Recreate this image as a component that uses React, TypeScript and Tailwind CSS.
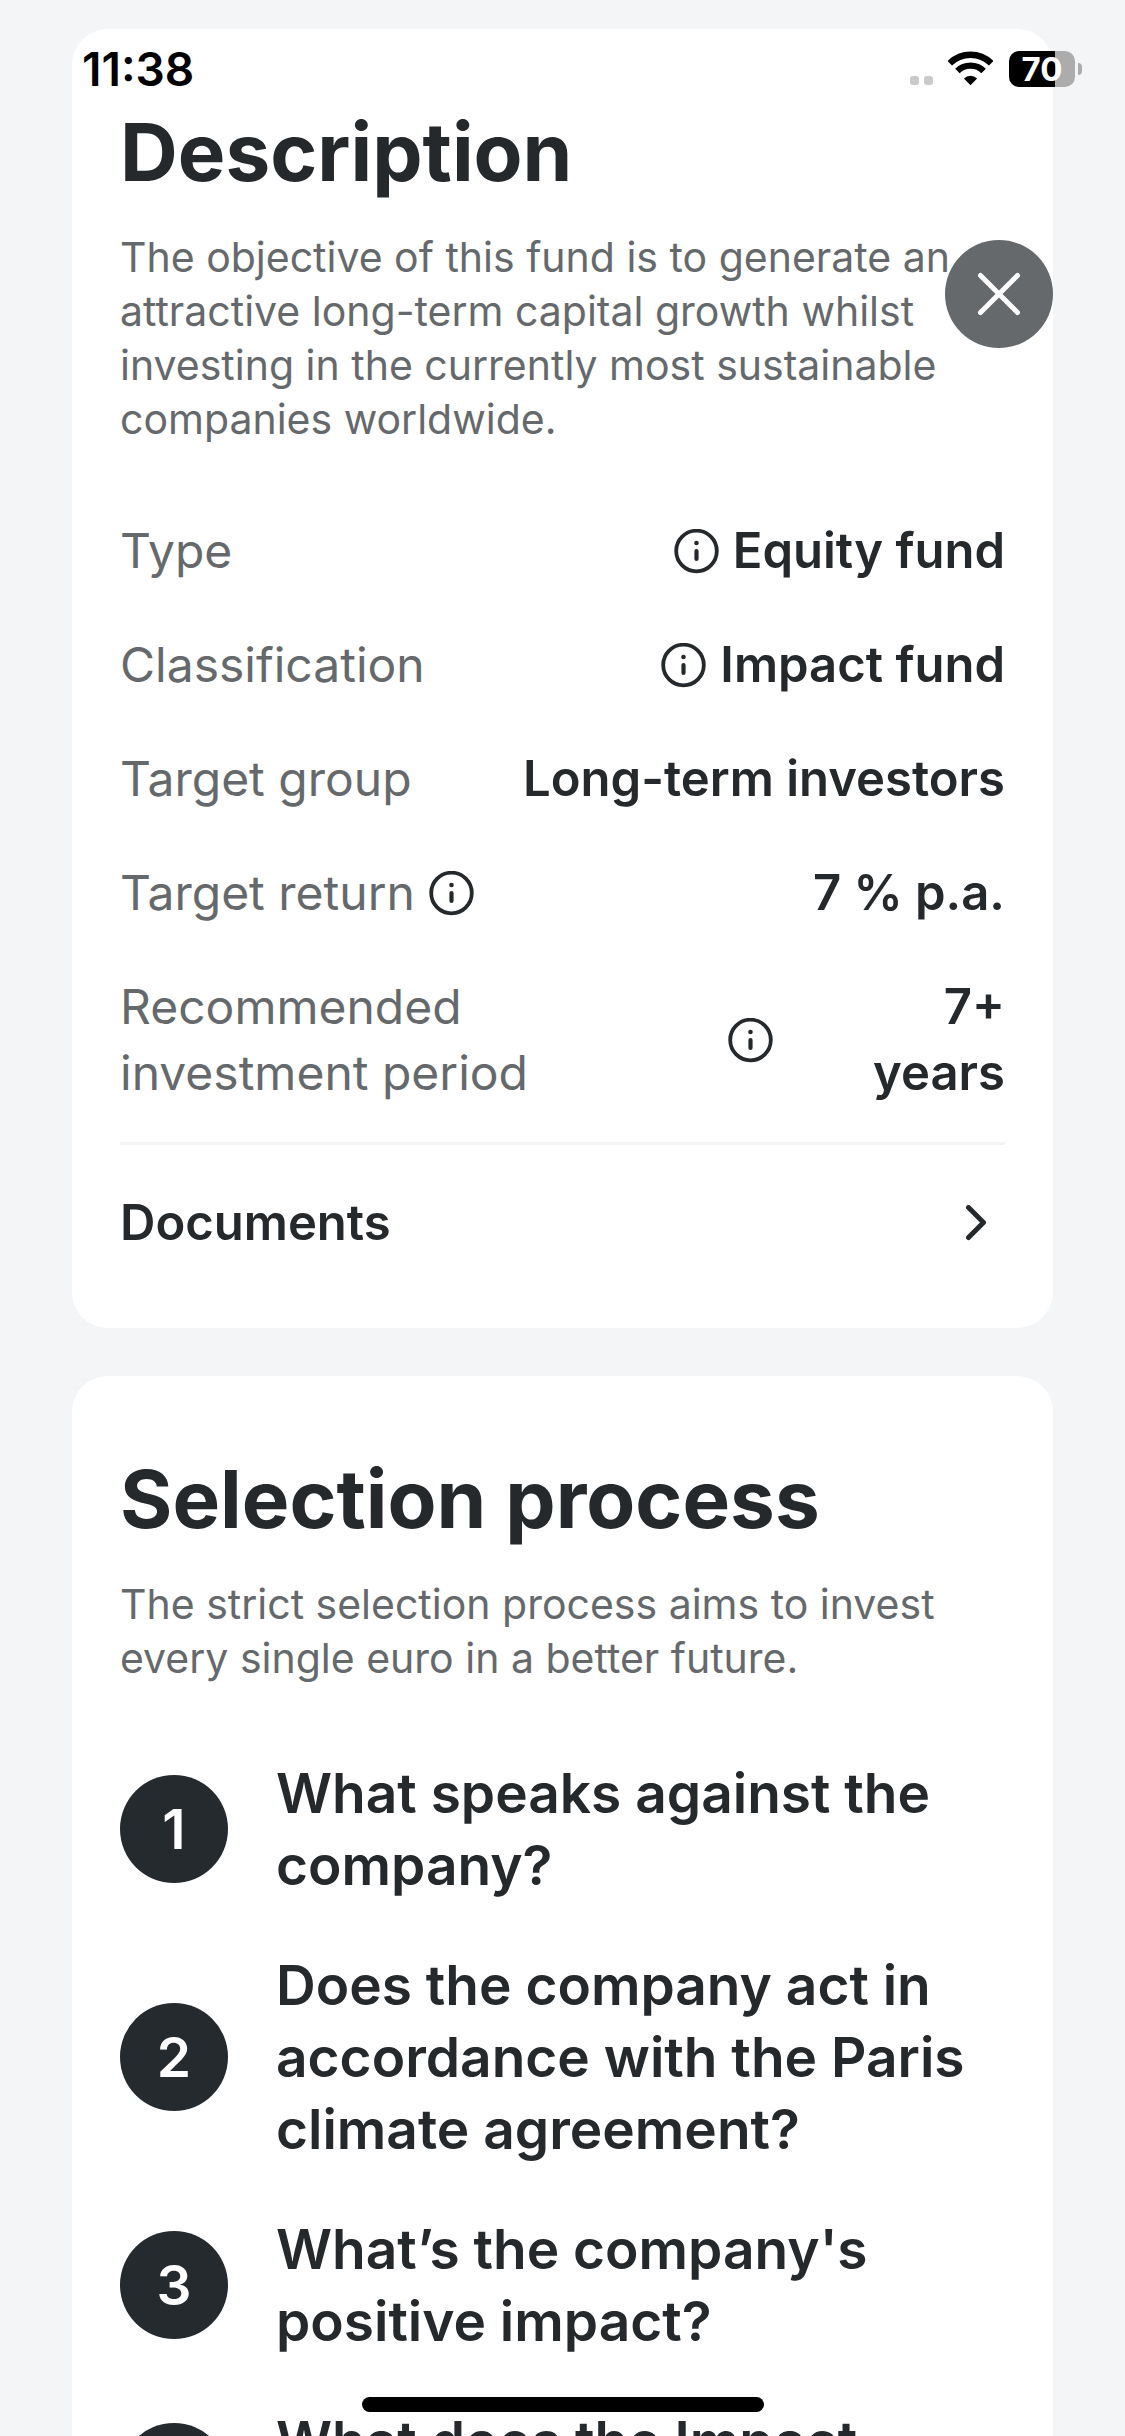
import type { ReactNode } from "react";

const steps = [
  "What speaks against the company?",
  "Does the company act in accordance with the Paris climate agreement?",
  "What’s the company's positive impact?",
  "What does the Impact",
];

function InfoButton({ label }: { label: string }) {
  return (
    <button type="button" aria-label={label} className="shrink-0 cursor-pointer">
      <svg className="h-[45px] w-[45px]" viewBox="0 0 45 45" fill="none">
        <circle cx="22.5" cy="22" r="20.3" stroke="#25292c" strokeWidth="3.8" />
        <circle cx="22.5" cy="14" r="2.3" fill="#25292c" />
        <path d="M22.5 22v8" stroke="#25292c" strokeWidth="4.2" strokeLinecap="round" />
      </svg>
    </button>
  );
}

function Row({ label, labelInfo, children }: { label: string; labelInfo?: boolean; children: ReactNode }) {
  return (
    <div className="flex items-center justify-between py-6 leading-[66px]">
      <dt className="flex max-w-[480px] items-center gap-3.5 text-[48px] text-[#66696b]">
        {label}
        {labelInfo && <InfoButton label={`About ${label}`} />}
      </dt>
      <dd className="flex items-center gap-3.5 text-right text-[49px] font-semibold">{children}</dd>
    </div>
  );
}

function Card({ title, intro, children }: { title: string; intro: string; children: ReactNode }) {
  return (
    <section className="rounded-[36px] bg-white px-12 pt-[72px] pb-[72px]">
      <h2 className="text-[80px] leading-[102px] font-bold">{title}</h2>
      <p className="mt-[27px] text-[41px] leading-[54px] text-[#66696b]">{intro}</p>
      {children}
    </section>
  );
}

function StatusBar() {
  return (
    <div className="absolute inset-x-0 top-0 flex items-center justify-between pt-[42px] pr-[43px] pl-[82px] text-black">
      <span className="text-[46px] leading-[54px] font-semibold">11:38</span>
      <div className="flex items-center">
        <svg className="mr-3.5 h-9 w-6" viewBox="0 0 24 36" fill="#cacaca">
          <rect x="0" y="25" width="9" height="9" rx="3" />
          <rect x="14" y="25" width="9" height="9" rx="3" />
        </svg>
        <svg className="mr-4 h-9 w-[45px]" viewBox="0 0 45 36" fill="none" stroke="#000">
          <path d="M1.8 12.2a29.4 29.4 0 0 1 41.4 0" strokeWidth="6.4" />
          <path d="M9.4 20a18.6 18.6 0 0 1 26.2 0" strokeWidth="6.4" />
          <path d="M22.5 34.2l6.6-6.7a9.4 9.4 0 0 0-13.2 0z" fill="#000" stroke="none" />
        </svg>
        <div className="flex h-9 w-[66px] items-center justify-center rounded-[10px] bg-[linear-gradient(to_right,#000_70%,#acacac_70%)] text-[33px] leading-9 font-bold text-white">
          70
        </div>
        <div className="ml-[3px] h-3 w-1 rounded-r-full bg-[#acacac]" />
      </div>
    </div>
  );
}

export default function App() {
  return (
    <div className="relative h-screen overflow-hidden bg-[#f3f5f7] font-['Inter',sans-serif] text-[#25292c]">
      <main className="flex flex-col gap-12 px-[72px] pt-[29px]">
        <Card
          title="Description"
          intro="The objective of this fund is to generate an attractive long-term capital growth whilst investing in the currently most sustainable companies worldwide."
        >
          <dl className="mt-12 mb-3">
            <Row label="Type">
              <InfoButton label="About equity funds" />
              Equity fund
            </Row>
            <Row label="Classification">
              <InfoButton label="About impact funds" />
              Impact fund
            </Row>
            <Row label="Target group">Long-term investors</Row>
            <Row label="Target return" labelInfo>
              7 % p.a.
            </Row>
            <Row label="Recommended investment period">
              <InfoButton label="About the investment period" />
              <span className="w-[218px]">
                7+
                <br />
                years
              </span>
            </Row>
          </dl>
          <a
            href="#documents"
            className="flex items-center justify-between border-t-[3px] border-[#f3f4f5] pt-[45px] pr-3.5 text-[49px] leading-[66px] font-semibold"
          >
            Documents
            <svg className="h-9 w-7" viewBox="0 0 28 36" fill="none">
              <path d="M5.5 2.5l15 15-15 15" stroke="#25292c" strokeWidth="5" strokeLinecap="round" strokeLinejoin="round" />
            </svg>
          </a>
        </Card>

        <Card
          title="Selection process"
          intro="The strict selection process aims to invest every single euro in a better future."
        >
          <ol className="mt-[72px] flex flex-col gap-12">
            {steps.map((step, i) => (
              <li key={step} className="flex min-h-[144px] items-center gap-12">
                <span className="flex h-[108px] w-[108px] shrink-0 items-center justify-center rounded-full bg-[#252a2f] text-[55px] font-semibold text-white">
                  {i + 1}
                </span>
                <span className="self-start text-[55px] leading-[72px] font-semibold">{step}</span>
              </li>
            ))}
          </ol>
        </Card>
      </main>

      <StatusBar />

      <button
        type="button"
        aria-label="Close"
        className="absolute top-60 right-[72px] flex h-[108px] w-[108px] cursor-pointer items-center justify-center rounded-full bg-[#66696c]"
      >
        <svg className="h-11 w-11" viewBox="0 0 44 44" fill="none">
          <path d="M3.5 3.5l37 37M40.5 3.5l-37 37" stroke="#fff" strokeWidth="5" strokeLinecap="round" />
        </svg>
      </button>

      <div className="absolute bottom-6 left-1/2 h-[15px] w-[402px] -translate-x-1/2 rounded-full bg-black" />
    </div>
  );
}
